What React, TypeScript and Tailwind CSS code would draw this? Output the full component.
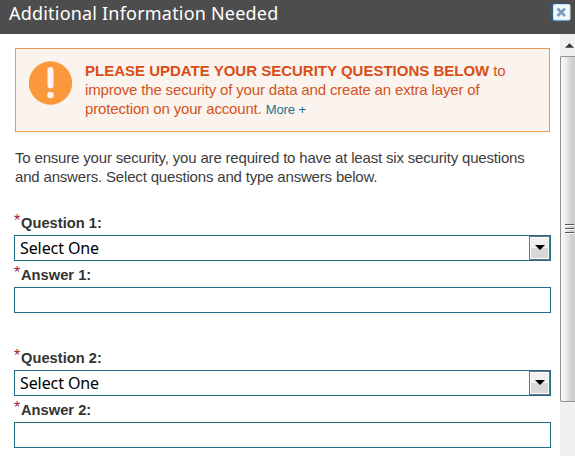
const questions = [1, 2];

function CloseIcon() {
    return (
        <svg width="20" height="19" viewBox="0 0 20 19">
            <rect x="0.5" y="0.5" width="18.5" height="18" rx="1.5" fill="#2f6390" />
            <rect x="2" y="1" width="17.5" height="16.5" rx="2" fill="#c7e2f5" />
            <rect x="3" y="2" width="15.5" height="14.5" rx="1" fill="#f2f9fd" />
            <path d="M6.5 5.5l7.5 7.5M14 5.5L6.5 13" stroke="#7d9cc3" strokeWidth="2.8" />
        </svg>
    );
}

function WarningIcon() {
    return (
        <svg width="44" height="44" viewBox="0 0 44 44">
            <circle cx="21.5" cy="22" r="21.7" fill="#fb983b" />
            <rect x="18.5" y="6" width="6" height="21.5" rx="3" fill="#fbf3ee" />
            <circle cx="21.5" cy="34" r="3.3" fill="#fbf3ee" />
        </svg>
    );
}

function FieldLabel({ text }: { text: string }) {
    return (
        <label className="flex h-[26px] items-start text-[14.67px] leading-[29px] font-bold tracking-[0.02px] text-[#333333]">
            <span className="w-[7px] text-[16px] leading-[24px] font-normal text-[#a3173f]">*</span>
            {text}
        </label>
    );
}

function QuestionFields({ number }: { number: number }) {
    return (
        <div className="h-[135px]">
            <FieldLabel text={`Question ${number}:`} />
            <button className="flex h-[26px] w-full border border-[#226d87] bg-white text-left">
                <span className="flex-1 pl-[5px] font-['Noto_Sans',sans-serif] text-[16px] leading-[25px] tracking-[-0.1px] text-black">
                    Select One
                </span>
                <span className="flex h-6 w-[21px] items-center justify-center border border-[#66717a] bg-linear-to-b from-[#f0f0f0] from-50% to-[#d8d8d8] to-50% shadow-[inset_0_0_0_1px_#fff]">
                    <svg width="10" height="5" viewBox="0 0 10 5" className="mb-px">
                        <path d="M0 0h10L5 5z" fill="#000" />
                    </svg>
                </span>
            </button>
            <FieldLabel text={`Answer ${number}:`} />
            <input className="block h-[26px] w-full border border-[#226d87] bg-white px-1 outline-none" />
        </div>
    );
}

function Scrollbar() {
    return (
        <div className="flex w-[15px] flex-col bg-[#f0f0f0]">
            <div className="flex h-[22px] items-center justify-center pl-[3px]">
                <svg width="9" height="5" viewBox="0 0 10 5">
                    <path d="M0 5L5 0l5 5z" fill="#333" />
                </svg>
            </div>
            <div className="flex h-[346px] flex-col items-end justify-center gap-[3px] rounded-l-[2px] border-y border-l border-[#929294] bg-linear-to-r from-[#f5f5f6] from-20% to-[#ceced2] to-80% pr-px pb-0.5">
                <span className="h-px w-[9px] bg-[#55565a] shadow-[0_1px_0_#fff]" />
                <span className="h-px w-[9px] bg-[#55565a] shadow-[0_1px_0_#fff]" />
                <span className="h-px w-[9px] bg-[#55565a] shadow-[0_1px_0_#fff]" />
            </div>
        </div>
    );
}

export default function App() {
    return (
        <div className="flex h-[456px] w-[575px] flex-col overflow-hidden bg-white font-['Liberation_Sans',Arial,sans-serif]">
            <header className="flex h-[34px] shrink-0 items-start justify-between bg-[#4d4d4d] pr-[4px] pl-[9px]">
                <h1 className="font-['Noto_Sans',sans-serif] text-[18px] leading-[26px] tracking-[0.2px] whitespace-nowrap text-white">
                    Additional Information Needed
                </h1>
                <button aria-label="Close" className="mt-[3px]">
                    <CloseIcon />
                </button>
            </header>
            <div className="flex min-h-0 flex-1">
                <main className="flex-1 overflow-hidden pt-[14px] pr-[9px] pl-[14px]">
                    <div className="mr-px ml-px flex h-[84px] border border-[#e69d52] bg-[#faf3ee] pt-[12px] pl-[13px]">
                        <WarningIcon />
                        <p className="pl-3 text-[15px] leading-[19px] tracking-[-0.16px] whitespace-nowrap text-[#d25422]">
                            <strong className="tracking-[0px] text-[#d94e16]">PLEASE UPDATE YOUR SECURITY QUESTIONS BELOW</strong> to
                            <br />
                            improve the security of your data and create an extra layer of
                            <br />
                            protection on your account.{" "}
                            <a href="#more" className="text-[13px] tracking-[-0.1px] text-[#1c708f]">More +</a>
                        </p>
                    </div>
                    <p className="ml-px mt-[16px] mb-[23px] text-[15px] leading-[19px] tracking-[-0.18px] whitespace-nowrap text-[#3d3d3d]">
                        To ensure your security, you are required to have at least six security questions
                        <br />
                        and answers. Select questions and type answers below.
                    </p>
                    {questions.map((number) => (
                        <QuestionFields key={number} number={number} />
                    ))}
                </main>
                <Scrollbar />
            </div>
        </div>
    );
}
